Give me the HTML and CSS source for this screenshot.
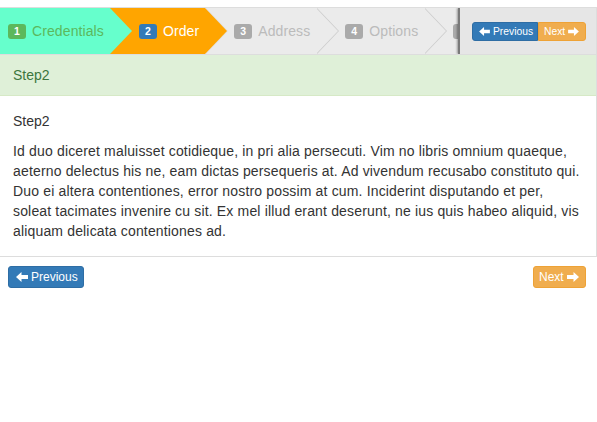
FILE: index.html
```html
<!DOCTYPE html>
<html>
<head>
<meta charset="utf-8">
<link rel="stylesheet" href="styles.css">
</head>
<body>
<div class="wizard">
  <div class="nav">
    <ul class="steps">
      <li class="step step-done first"><span class="badge">1</span><span class="label">Credentials</span></li>
      <li class="step step-active"><span class="badge">2</span><span class="label">Order</span></li>
      <li class="step step-todo"><span class="badge">3</span><span class="label">Address</span></li>
      <li class="step step-todo"><span class="badge">4</span><span class="label">Options</span></li>
      <li class="step step-todo"><span class="badge badge-cut"></span></li>
    </ul>
    <div class="toolbar">
      <div class="btn-group">
        <button class="btn btn-primary btn-tiny"><svg class="ico" viewBox="0 0 12 10"><path d="M0 5 L5.5 0 V3 H12 V7 H5.5 V10 Z"/></svg>Previous</button><button class="btn btn-warning btn-tiny">Next<svg class="ico ico-r" viewBox="0 0 12 10"><path d="M12 5 L6.5 0 V3 H0 V7 H6.5 V10 Z"/></svg></button>
      </div>
    </div>
  </div>
  <div class="panel-heading">Step2</div>
  <div class="panel-body">
    <div class="title">Step2</div>
    <p class="text">Id duo diceret maluisset cotidieque, in pri alia persecuti. Vim no libris omnium quaeque, aeterno delectus his ne, eam dictas persequeris at. Ad vivendum recusabo constituto qui. Duo ei altera contentiones, error nostro possim at cum. Inciderint disputando et per, soleat tacimates invenire cu sit. Ex mel illud erant deserunt, ne ius quis habeo aliquid, vis aliquam delicata contentiones ad.</p>
  </div>
</div>
<div class="actions">
  <button class="btn btn-primary btn-xs"><svg class="ico" viewBox="0 0 12 10"><path d="M0 5 L5.5 0 V3 H12 V7 H5.5 V10 Z"/></svg>Previous</button>
  <button class="btn btn-warning btn-xs">Next<svg class="ico ico-r" viewBox="0 0 12 10"><path d="M12 5 L6.5 0 V3 H0 V7 H6.5 V10 Z"/></svg></button>
</div>
</body>
</html>
```

FILE: styles.css
```css
* { box-sizing: border-box; }
html, body { margin: 0; padding: 0; background: #fff; }
body {
  font-family: "Liberation Sans", Arial, sans-serif;
  font-size: 14px;
  line-height: 20px;
  color: #333;
}
.wizard {
  margin-top: 7px;
  border: 1px solid #ddd;
  border-left-width: 0;
}
.nav {
  display: flex;
  height: 47px;
  border-bottom: 1px solid #ddd;
  overflow: hidden;
}
.steps {
  list-style: none;
  margin: 0;
  padding: 0;
  display: flex;
  flex: 1;
  min-width: 0;
  overflow: hidden;
  height: 46px;
}
.step {
  position: relative;
  display: flex;
  align-items: center;
  flex: none;
  height: 46px;
  padding: 0 6px 0 29px;
  font-size: 14px;
}
.step.first { padding-left: 8px; }
.label { letter-spacing: 0.1px; }
.step::before,
.step::after {
  content: "";
  position: absolute;
  top: 0;
  width: 0;
  height: 0;
  border-top: 23px solid transparent;
  border-bottom: 23px solid transparent;
  z-index: 2;
}
.step::before { left: calc(100% + 1px); border-left: 22px solid #ccc; }
.step::after { left: 100%; border-left: 22px solid #ebebeb; z-index: 3; }
.badge {
  display: inline-block;
  width: 18px;
  height: 15px;
  line-height: 15px;
  text-align: center;
  font-size: 10.5px;
  font-weight: bold;
  color: #fff;
  border-radius: 3px;
  margin-right: 6px;
}
.badge-cut { margin-right: 40px; }
.step-done { background: #66ffcc; color: #5cb85c; }
.step-done .badge { background: #5cb85c; }
.step-done::after { border-left-color: #66ffcc; }
.step-done::before { border-left-color: transparent; }
.step-active { background: #ffa500; color: #fff; }
.step-active .badge { background: #337ab7; }
.step-active::after { border-left-color: #ffa500; }
.step-active::before { border-left-color: #e0e0e0; }
.step-todo { background: #ebebeb; color: #bbb; }
.step-todo .badge { background: #aaa; }
.toolbar {
  flex: none;
  width: 138px;
  height: 46px;
  background: #e6e6e6;
  border-left: 2px solid #7a7a7a;
  box-shadow: -1px 0 2px rgba(0,0,0,0.35);
  position: relative;
  z-index: 5;
  display: flex;
  align-items: center;
  padding: 0 0 0 12px;
}
.btn-group { display: flex; }
.btn {
  font-family: "Liberation Sans", Arial, sans-serif;
  color: #fff;
  border: 1px solid transparent;
  display: inline-flex;
  align-items: center;
  cursor: pointer;
  margin: 0;
}
.btn-primary { background: #337ab7; border-color: #2e6da4; }
.btn-warning { background: #f0ad4e; border-color: #eea236; }
.ico { width: 12px; height: 10px; fill: #fff; margin-right: 3px; flex: none; }
.ico-r { margin-right: 0; margin-left: 3px; }
.btn-tiny {
  height: 19px;
  font-size: 10.3px;
  line-height: 17px;
  padding: 0 6px;
}
.btn-tiny .ico { width: 11px; height: 9px; }
.btn-group .btn-primary { width: 66px; border-radius: 3px 0 0 3px; padding-left: 6px; }
.btn-group .btn-warning { width: 48px; border-radius: 0 3px 3px 0; padding-left: 5px; }
.panel-heading {
  background: #dff0d8;
  color: #3c763d;
  border-bottom: 1px solid #d6e9c6;
  padding: 10px 13px;
  height: 41px;
}
.panel-body {
  padding: 15px 14px 15px 13px;
}
.title { line-height: 20px; }
.text { margin: 10px 0 0; letter-spacing: 0.16px; }
.actions {
  display: flex;
  justify-content: space-between;
  padding: 9px 11px 0 8px;
}
.btn-xs {
  height: 22px;
  font-size: 12px;
  line-height: 18px;
  padding: 1px 5px;
  border-radius: 3px;
}
.actions .btn-primary { width: 76px; padding-left: 7px; }
.actions .btn-warning { width: 53px; padding-left: 5px; }
```
